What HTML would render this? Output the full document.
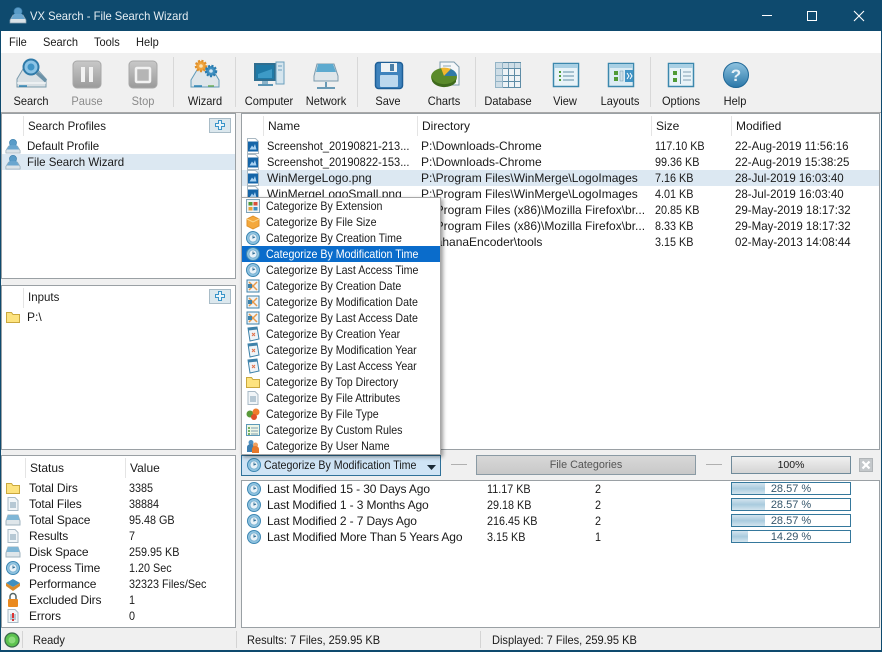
<!DOCTYPE html>
<html><head><meta charset="utf-8"><title>VX Search</title>
<style>
html,body{margin:0;padding:0;width:882px;height:652px;overflow:hidden;background:#f0f0f0}
body{position:relative;font:12px "Liberation Sans",sans-serif;color:#1a1a1a}
.a,.t,svg.i{position:absolute}
.t{white-space:nowrap;line-height:16px;height:16px}
.g{color:#8a8a8a}
.c{text-align:center}
.b{background:#fff;position:absolute;border:1px solid #9aa0a4;box-sizing:border-box}
.m{left:266px;transform:scaleX(.886);transform-origin:0 50%}
.n{transform:scaleX(.9);transform-origin:0 50%}
.d{transform:scaleX(.958);transform-origin:0 50%}
.s{transform:scaleX(.92);transform-origin:0 50%}
.c.s{transform-origin:50% 50%}
.l{transform:scaleX(.958);transform-origin:0 50%}
.k{letter-spacing:-.13px}
.p{position:absolute;left:731px;width:120px;height:13px;border:1px solid #35789c;box-sizing:border-box;background:#fff;text-align:center;line-height:12px;font-size:11px;color:#35566b}
.p i{position:absolute;left:0;top:0;bottom:0;background:linear-gradient(#d3e4ee,#a9cbde 50%,#d3e4ee)}
.p span{position:relative}
</style></head><body>
<svg width="0" height="0" style="position:absolute">
<defs>
<symbol id="clock" viewBox="0 0 16 16"><circle cx="8" cy="8" r="6.500" fill="#8fc3e0" stroke="#3d87b3"/><circle cx="8" cy="8" r="4" fill="#e8f2f8" stroke="#5f9fc6" stroke-width=".6"/><path d="M8 5.500V8l2-1" stroke="#2f6e96" fill="none" stroke-width="1"/></symbol>
<symbol id="png" viewBox="0 0 16 16"><path d="M2.500 .5h8l3 3v12h-11z" fill="#fff" stroke="#a9b8c2"/><rect x="3" y="3.500" width="10" height="10" fill="#1565a8"/><path d="M4.500 11.500l2.500-4 1.500 2 1.500-3.500 1.500 5.500z" fill="#a9d2f2"/></symbol>
<symbol id="folder" viewBox="0 0 16 16"><path d="M1.500 3.500h5l1.500 2h6.500v8h-13z" fill="#fde37f" stroke="#caa83e"/></symbol>
<symbol id="cal" viewBox="0 0 16 16"><rect x="2" y="2" width="12" height="12" fill="#eef4f8" stroke="#3e82aa"/><path d="M4 4l8 8M12 4l-8 8" stroke="#e89a4a" stroke-width="1.500"/><rect x="3" y="6" width="4" height="4" fill="#3e82aa"/></symbol>
<symbol id="year" viewBox="0 0 16 16"><path d="M3 2l9-1 2 12-9 2z" fill="#eef4f8" stroke="#3e82aa"/><path d="M3 2l9-1 .4 2.500-9 1z" fill="#3e82aa"/><path d="M7 7l3 3M10 7l-3 3" stroke="#e0704a"/></symbol>
<symbol id="doc" viewBox="0 0 16 16"><path d="M3 1.500h7l3 3v10H3z" fill="#f1f5f8" stroke="#a9bac6"/><path d="M5 7h6M5 9h6M5 11h6" stroke="#7b9bb0"/></symbol>
<symbol id="disk" viewBox="0 0 16 16"><path d="M3 3h10l2 6v4H1V9z" fill="#dfe6ea" stroke="#9fb3bf"/><path d="M3 3h10l1.500 5h-13z" fill="#7fb6d6"/></symbol>
<symbol id="prof" viewBox="0 0 18 18"><path d="M1 14l3-5h10l3 5v3H1z" fill="#dbe3e8" stroke="#8ea4b2" stroke-width=".7"/><circle cx="9" cy="5.500" r="4" fill="#5a9cc8" stroke="#3c7fac" stroke-width=".7"/><path d="M5 8h8l3 5H2z" fill="#6aa6cf"/></symbol>
</defs></svg>

<!-- title -->
<div class="a" style="left:0;top:0;width:882px;height:31px;background:#0e4a6e"></div>
<svg class="i" style="left:9px;top:6px" width="18" height="18"><use href="#prof"/></svg>
<div class="t" style="left:30px;top:8px;color:#e6eef3;transform:scaleX(.935);transform-origin:0 50%">VX Search - File Search Wizard</div>
<svg class="i" style="left:755px;top:8px" width="120" height="16"><path d="M7 7.500h10" stroke="#fff"/><rect x="52.500" y="3.500" width="9" height="9" fill="none" stroke="#fff"/><path d="M99 3l10 10M109 3l-10 10" stroke="#fff" stroke-width="1.100"/></svg>

<!-- frame -->
<div class="a" style="left:0;top:31px;width:1px;height:621px;background:#0e4a6e"></div>
<div class="a" style="right:0;top:31px;width:1px;height:621px;background:#0e4a6e"></div>
<div class="a" style="left:0;top:650px;width:882px;height:2px;background:#0e4a6e"></div>

<!-- menu -->
<div class="a" style="left:1px;top:31px;width:880px;height:22px;background:#fff"></div>
<div class="t s" style="left:9px;top:34px">File</div>
<div class="t s" style="left:43px;top:34px">Search</div>
<div class="t s" style="left:94px;top:34px">Tools</div>
<div class="t s" style="left:136px;top:34px">Help</div>

<!-- toolbar -->
<div class="a" style="left:1px;top:53px;width:880px;height:59px;background:#f0f0f0"></div>
<div class="a" style="left:1px;top:112px;width:880px;height:1px;background:#a8a8a8"></div>
<div class="a" style="left:173px;top:57px;width:1px;height:50px;background:#d8d8d8"></div>
<div class="a" style="left:235px;top:57px;width:1px;height:50px;background:#d8d8d8"></div>
<div class="a" style="left:357px;top:57px;width:1px;height:50px;background:#d8d8d8"></div>
<div class="a" style="left:475px;top:57px;width:1px;height:50px;background:#d8d8d8"></div>
<div class="a" style="left:650px;top:57px;width:1px;height:50px;background:#d8d8d8"></div>

<!-- toolbar icons -->
<svg class="i" style="left:0;top:56px" width="882" height="36">
<defs><linearGradient id="gr" x1="0" y1="0" x2="0" y2="1"><stop offset="0" stop-color="#c9c9c9"/><stop offset="1" stop-color="#9a9a9a"/></linearGradient>
<linearGradient id="bl" x1="0" y1="0" x2="0" y2="1"><stop offset="0" stop-color="#8fc3e0"/><stop offset="1" stop-color="#2a77a8"/></linearGradient></defs>
<!-- Search -->
<path d="M17 23l6-10h14l9 10v8H17z" fill="#d9e0e4" stroke="#7c9bad"/><path d="M17 27h29" stroke="#fff"/><path d="M19 30h8" stroke="#2f85b5" stroke-width="1.500"/>
<circle cx="31" cy="11" r="7.500" fill="#8cc4e6" stroke="#2f7aa8" stroke-width="2"/><circle cx="31" cy="11" r="3.500" fill="#3f94c6"/><path d="M37 17l9 8" stroke="#6b92a8" stroke-width="3.500"/>
<!-- Pause -->
<rect x="73" y="5" width="28" height="27" rx="4" fill="url(#gr)" stroke="#a8a8a8"/><rect x="81" y="11" width="4" height="15" fill="#f2f2f2"/><rect x="89" y="11" width="4" height="15" fill="#f2f2f2"/>
<!-- Stop -->
<rect x="129" y="5" width="28" height="27" rx="4" fill="url(#gr)" stroke="#a8a8a8"/><rect x="136" y="12" width="14" height="14" rx="1" fill="#b5b5b5" stroke="#f2f2f2" stroke-width="2.500"/>
<!-- Wizard -->
<path d="M191 24l6-10h16l6 10v7h-28z" fill="#dfe6ea" stroke="#5f9ab8"/><path d="M194 30h8" stroke="#2f85b5" stroke-width="1.500"/><path d="M208 30h6" stroke="#6fae5a" stroke-width="1.500"/>
<circle cx="201" cy="10" r="5" fill="#f0a33c" stroke="#e0902a" stroke-width="2.500" stroke-dasharray="2 1.400"/><circle cx="211" cy="15" r="5" fill="#3f8fc0" stroke="#2a7cb0" stroke-width="2.500" stroke-dasharray="2 1.400"/><circle cx="201" cy="10" r="1.800" fill="#fbe3b4"/><circle cx="211" cy="15" r="1.800" fill="#cfe6f3"/>
<!-- Computer -->
<rect x="255" y="8" width="20" height="16" fill="#1f79a6" stroke="#2f6e90" stroke-width="2"/><path d="M258 18l14-5v9h-14z" fill="#3d9ac6"/><rect x="262" y="25" width="6" height="3" fill="#8cb3c8"/><rect x="258" y="28" width="15" height="2" fill="#5a94b4"/>
<rect x="276" y="6" width="8" height="22" fill="#d5e5ee" stroke="#6ba0bd"/><path d="M278 10h4M278 14h4" stroke="#6ba0bd"/>
<!-- Network -->
<path d="M314 20l3-12h17l4 12v5h-24z" fill="#dfe6ea" stroke="#7c9bad"/><path d="M316 16l2-8h15l3 8z" fill="#5daacf"/><path d="M326 26v5M317 32h18" stroke="#6a9ab5" stroke-width="2"/>
<!-- Save -->
<rect x="375.500" y="6.500" width="27" height="26" rx="3" fill="#3f83bd" stroke="#1f5f97" stroke-width="1.500"/><rect x="381" y="7" width="16" height="9" fill="#eef2f5"/><rect x="390" y="8" width="4" height="7" fill="#4b7fa8"/><rect x="380" y="19" width="18" height="12" rx="1" fill="#bcd8ee"/>
<!-- Charts -->
<path d="M440 6h14l5 5v18h-19z" fill="#f4f7f9" stroke="#7c9bad"/><path d="M443 10h8M443 13h8" stroke="#8aa4b4"/>
<ellipse cx="444" cy="21" rx="13" ry="9" fill="#5a8a2a"/><path d="M444 20l-3-8a13 9 0 0 1 10 1z" fill="#f1b72f"/><path d="M444 20l7-7a13 9 0 0 1 6 7z" fill="#2f7aa8"/><path d="M432 22a13 9 0 0 0 24 1l0 3a13 9 0 0 1-24-1z" fill="#3f6a1c"/>
<!-- Database -->
<rect x="495.500" y="6.500" width="25" height="25" fill="#eef3f6" stroke="#5e8ca6"/><path d="M495 12.500h26M495 19.500h26M495 25.500h26M502.500 6v26M508.500 6v26M514.500 6v26" stroke="#5e8ca6" fill="none"/><rect x="495" y="6" width="8" height="26" fill="#b9cfdc" opacity=".6"/><rect x="503" y="7" width="18" height="5" fill="#b9cfdc" opacity=".6"/>
<!-- View -->
<rect x="553.500" y="7.500" width="25" height="23" fill="#e8f3f8" stroke="#3c88ad" stroke-width="1.500"/><rect x="554" y="8" width="24" height="4" fill="#a9d0e4"/><path d="M559 16h2M559 20h2M559 24h2" stroke="#4f9a36" stroke-width="2"/><path d="M563 16h11M563 20h11M563 24h11" stroke="#5f8ca5"/>
<!-- Layouts -->
<rect x="608.500" y="7.500" width="25" height="23" fill="#dcecf4" stroke="#3c88ad" stroke-width="1.500"/><rect x="609" y="8" width="24" height="4" fill="#a9d0e4"/><rect x="625" y="14" width="8" height="12" fill="#3f94c6"/><rect x="614" y="15" width="4" height="4" fill="#4f9a36"/><rect x="614" y="21" width="4" height="4" fill="#4f9a36"/><rect x="620" y="15" width="3" height="10" fill="#cfe0e8" stroke="#6d98ae" stroke-width=".5"/><path d="M627 17l2 3-2 3M630 17l2 3-2 3" stroke="#fff" fill="none"/>
<!-- Options -->
<rect x="668.500" y="7.500" width="25" height="23" fill="#e8f3f8" stroke="#3c88ad" stroke-width="1.500"/><rect x="669" y="8" width="24" height="4" fill="#a9d0e4"/><rect x="673" y="15" width="4" height="4" fill="#4f9a36"/><rect x="673" y="22" width="4" height="4" fill="#4f9a36"/><path d="M680.500 13v15" stroke="#6d98ae"/><path d="M683 16h8M683 20h8M683 24h8" stroke="#7f9fb2"/>
<!-- Help -->
<circle cx="736" cy="19" r="12.500" fill="url(#bl)" stroke="#1f6796"/>
<text x="736" y="25" font-family="Liberation Sans" font-weight="bold" font-size="17" fill="#e6f1f7" text-anchor="middle">?</text>
</svg>

<!-- toolbar labels -->
<div class="t c g s" style="left:66px;top:93px;width:42px">Pause</div>
<div class="t c s" style="left:1px;top:93px;width:60px">Search</div>
<div class="t c g s" style="left:122px;top:93px;width:42px">Stop</div>
<div class="t c s" style="left:175px;top:93px;width:60px">Wizard</div>
<div class="t c s" style="left:239px;top:93px;width:60px">Computer</div>
<div class="t c s" style="left:296px;top:93px;width:60px">Network</div>
<div class="t c s" style="left:358px;top:93px;width:60px">Save</div>
<div class="t c s" style="left:414px;top:93px;width:60px">Charts</div>
<div class="t c s" style="left:478px;top:93px;width:60px">Database</div>
<div class="t c s" style="left:535px;top:93px;width:60px">View</div>
<div class="t c s" style="left:590px;top:93px;width:60px">Layouts</div>
<div class="t c s" style="left:651px;top:93px;width:60px">Options</div>
<div class="t c s" style="left:705px;top:93px;width:60px">Help</div>

<!-- Search profiles panel -->
<div class="b" style="left:1px;top:113px;width:235px;height:166px"></div>
<div class="a" style="left:23px;top:116px;width:1px;height:20px;background:#e4e4e4"></div>
<div class="t l" style="left:28px;top:118px">Search Profiles</div>
<div class="a" style="left:209px;top:118px;width:22px;height:15px;background:#dce8ee;border:1px solid #a9bcc7;box-sizing:border-box"></div>
<svg class="i" style="left:214px;top:119px" width="12" height="12"><path d="M4.500 1.500h3v3h3v3h-3v3h-3v-3h-3v-3h3z" fill="#eaf5fb" stroke="#3a94c8"/></svg>
<div class="a" style="left:2px;top:154px;width:233px;height:16px;background:#dce8f2"></div>
<svg class="i" style="left:5px;top:138px" width="16" height="16"><use href="#prof"/></svg>
<svg class="i" style="left:5px;top:154px" width="16" height="16"><use href="#prof"/></svg>
<div class="t l" style="left:27px;top:138px">Default Profile</div>
<div class="t l" style="left:27px;top:154px">File Search Wizard</div>

<!-- Inputs -->
<div class="b" style="left:1px;top:285px;width:235px;height:165px"></div>
<div class="a" style="left:23px;top:288px;width:1px;height:20px;background:#e4e4e4"></div>
<div class="t l" style="left:28px;top:289px">Inputs</div>
<div class="a" style="left:209px;top:289px;width:22px;height:15px;background:#dce8ee;border:1px solid #a9bcc7;box-sizing:border-box"></div>
<svg class="i" style="left:214px;top:290px" width="12" height="12"><path d="M4.500 1.500h3v3h3v3h-3v3h-3v-3h-3v-3h3z" fill="#eaf5fb" stroke="#3a94c8"/></svg>
<svg class="i" style="left:5px;top:309px" width="16" height="16"><use href="#folder"/></svg>
<div class="t" style="left:27px;top:309px">P:\</div>

<!-- Status panel -->
<div class="b" style="left:1px;top:455px;width:235px;height:173px"></div>
<div class="a" style="left:25px;top:458px;width:1px;height:20px;background:#e4e4e4"></div>
<div class="a" style="left:125px;top:458px;width:1px;height:20px;background:#e4e4e4"></div>
<div class="t" style="left:30px;top:460px">Status</div>
<div class="t" style="left:130px;top:460px">Value</div>
<svg class="i" style="left:5px;top:480px" width="16" height="16"><use href="#folder"/></svg>
<svg class="i" style="left:5px;top:496px" width="16" height="16"><use href="#doc"/></svg>
<svg class="i" style="left:5px;top:512px" width="16" height="16"><use href="#disk"/></svg>
<svg class="i" style="left:5px;top:528px" width="16" height="16"><use href="#doc"/></svg>
<svg class="i" style="left:5px;top:544px" width="16" height="16"><use href="#disk"/></svg>
<svg class="i" style="left:5px;top:560px" width="16" height="16"><use href="#clock"/></svg>
<svg class="i" style="left:5px;top:576px" width="16" height="16"><path d="M1 7l7-4 7 4-7 4z" fill="#3f8fc0"/><path d="M1 7v3l7 5 7-5V7l-7 4z" fill="#d98a2c"/></svg>
<svg class="i" style="left:5px;top:592px" width="16" height="16"><rect x="3" y="7" width="10" height="8" rx="1" fill="#ea8a20"/><path d="M5 7V4.500a3 3 0 0 1 6 0V7" fill="none" stroke="#566" stroke-width="1.500"/></svg>
<svg class="i" style="left:5px;top:608px" width="16" height="16"><use href="#doc"/><rect x="7" y="5" width="2" height="5" fill="#d33"/><rect x="7" y="11" width="2" height="2" fill="#d33"/></svg>
<div class="t k" style="left:29px;top:480px">Total Dirs</div><div class="t n" style="left:129px;top:480px">3385</div>
<div class="t k" style="left:29px;top:496px">Total Files</div><div class="t n" style="left:129px;top:496px">38884</div>
<div class="t k" style="left:29px;top:512px">Total Space</div><div class="t n" style="left:129px;top:512px">95.48 GB</div>
<div class="t k" style="left:29px;top:528px">Results</div><div class="t n" style="left:129px;top:528px">7</div>
<div class="t k" style="left:29px;top:544px">Disk Space</div><div class="t n" style="left:129px;top:544px">259.95 KB</div>
<div class="t k" style="left:29px;top:560px">Process Time</div><div class="t n" style="left:129px;top:560px">1.20 Sec</div>
<div class="t k" style="left:29px;top:576px">Performance</div><div class="t n" style="left:129px;top:576px">32323 Files/Sec</div>
<div class="t k" style="left:29px;top:592px">Excluded Dirs</div><div class="t n" style="left:129px;top:592px">1</div>
<div class="t k" style="left:29px;top:608px">Errors</div><div class="t n" style="left:129px;top:608px">0</div>

<!-- File list -->
<div class="b" style="left:241px;top:113px;width:639px;height:337px"></div>
<div class="a" style="left:263px;top:116px;width:1px;height:20px;background:#e4e4e4"></div>
<div class="a" style="left:417px;top:116px;width:1px;height:20px;background:#e4e4e4"></div>
<div class="a" style="left:651px;top:116px;width:1px;height:20px;background:#e4e4e4"></div>
<div class="a" style="left:731px;top:116px;width:1px;height:20px;background:#e4e4e4"></div>
<div class="t" style="left:268px;top:118px">Name</div>
<div class="t" style="left:422px;top:118px">Directory</div>
<div class="t" style="left:656px;top:118px">Size</div>
<div class="t" style="left:736px;top:118px">Modified</div>
<div class="a" style="left:242px;top:170px;width:637px;height:16px;background:#dce8f2"></div>
<svg class="i" style="left:245px;top:138px" width="16" height="16"><use href="#png"/></svg>
<svg class="i" style="left:245px;top:154px" width="16" height="16"><use href="#png"/></svg>
<svg class="i" style="left:245px;top:170px" width="16" height="16"><use href="#png"/></svg>
<svg class="i" style="left:245px;top:186px" width="16" height="16"><use href="#png"/></svg>
<div class="t s" style="left:267px;top:138px">Screenshot_20190821-213...</div><div class="t" style="left:421px;top:138px">P:\Downloads-Chrome</div><div class="t n" style="left:655px;top:138px">117.10 KB</div><div class="t d" style="left:735px;top:138px">22-Aug-2019 11:56:16</div>
<div class="t s" style="left:267px;top:154px">Screenshot_20190822-153...</div><div class="t" style="left:421px;top:154px">P:\Downloads-Chrome</div><div class="t n" style="left:655px;top:154px">99.36 KB</div><div class="t d" style="left:735px;top:154px">22-Aug-2019 15:38:25</div>
<div class="t" style="left:267px;top:170px">WinMergeLogo.png</div><div class="t" style="left:421px;top:170px">P:\Program Files\WinMerge\LogoImages</div><div class="t n" style="left:655px;top:170px">7.16 KB</div><div class="t d" style="left:735px;top:170px">28-Jul-2019 16:03:40</div>
<div class="t" style="left:267px;top:186px">WinMergeLogoSmall.png</div><div class="t" style="left:421px;top:186px">P:\Program Files\WinMerge\LogoImages</div><div class="t n" style="left:655px;top:186px">4.01 KB</div><div class="t d" style="left:735px;top:186px">28-Jul-2019 16:03:40</div>
<div class="t" style="left:421px;top:202px">P:\Program Files (x86)\Mozilla Firefox\br...</div><div class="t n" style="left:655px;top:202px">20.85 KB</div><div class="t d" style="left:735px;top:202px">29-May-2019 18:17:32</div>
<div class="t" style="left:421px;top:218px">P:\Program Files (x86)\Mozilla Firefox\br...</div><div class="t n" style="left:655px;top:218px">8.33 KB</div><div class="t d" style="left:735px;top:218px">29-May-2019 18:17:32</div>
<div class="t" style="left:421px;top:234px">P:\ahanaEncoder\tools</div><div class="t n" style="left:655px;top:234px">3.15 KB</div><div class="t d" style="left:735px;top:234px">02-May-2013 14:08:44</div>

<!-- Bottom toolbar -->
<div class="a" style="left:241px;top:455px;width:200px;height:21px;box-sizing:border-box;border:1px solid #2f7199;background:#cfe4f5"></div>
<svg class="i" style="left:246px;top:457px" width="16" height="16"><use href="#clock"/></svg>
<div class="t" style="left:264px;top:457px;transform:scaleX(.886);transform-origin:0 50%">Categorize By Modification Time</div>
<svg class="i" style="left:427px;top:465px" width="10" height="6"><path d="M0 0h9L4.500 5z" fill="#1a2a36"/></svg>
<div class="a" style="left:451px;top:464px;width:16px;height:1px;background:#b0b0b0"></div>
<div class="a" style="left:476px;top:455px;width:220px;height:20px;box-sizing:border-box;border:1px solid #8a9aa4;background:linear-gradient(#d8d8d8,#c8c8c8);text-align:center;line-height:18px;color:#555;font-size:10.8px">File Categories</div>
<div class="a" style="left:706px;top:464px;width:16px;height:1px;background:#b0b0b0"></div>
<div class="a" style="left:731px;top:456px;width:120px;height:18px;box-sizing:border-box;border:1px solid #6f8a9a;background:linear-gradient(#f0f0f0,#d4d4d4);text-align:center;line-height:16px;font-size:10.5px">100%</div>
<div class="a" style="left:859px;top:458px;width:14px;height:14px;background:#c4c8cb;border:1px solid #b0b4b7;box-sizing:border-box"></div>
<svg class="i" style="left:859px;top:458px" width="14" height="14"><path d="M3.500 3.500l7 7M10.500 3.500l-7 7" stroke="#fff" stroke-width="2.200"/></svg>

<!-- Category list -->
<div class="b" style="left:241px;top:480px;width:639px;height:148px"></div>
<svg class="i" style="left:246px;top:481px" width="16" height="16"><use href="#clock"/></svg>
<svg class="i" style="left:246px;top:497px" width="16" height="16"><use href="#clock"/></svg>
<svg class="i" style="left:246px;top:513px" width="16" height="16"><use href="#clock"/></svg>
<svg class="i" style="left:246px;top:529px" width="16" height="16"><use href="#clock"/></svg>
<div class="t k" style="left:267px;top:481px">Last Modified 15 - 30 Days Ago</div><div class="t n" style="left:487px;top:481px">11.17 KB</div><div class="t n" style="left:595px;top:481px">2</div>
<div class="t k" style="left:267px;top:497px">Last Modified 1 - 3 Months Ago</div><div class="t n" style="left:487px;top:497px">29.18 KB</div><div class="t n" style="left:595px;top:497px">2</div>
<div class="t k" style="left:267px;top:513px">Last Modified 2 - 7 Days Ago</div><div class="t n" style="left:487px;top:513px">216.45 KB</div><div class="t n" style="left:595px;top:513px">2</div>
<div class="t k" style="left:267px;top:529px">Last Modified More Than 5 Years Ago</div><div class="t n" style="left:487px;top:529px">3.15 KB</div><div class="t n" style="left:595px;top:529px">1</div>
<div class="p" style="top:482px"><i style="width:33px"></i><span>28.57 %</span></div>
<div class="p" style="top:498px"><i style="width:33px"></i><span>28.57 %</span></div>
<div class="p" style="top:514px"><i style="width:33px"></i><span>28.57 %</span></div>
<div class="p" style="top:530px"><i style="width:16px"></i><span>14.29 %</span></div>

<!-- Status bar -->
<div class="a" style="left:1px;top:628px;width:880px;height:22px;background:#f0f0f0"></div>
<div class="a" style="left:22px;top:631px;width:1px;height:17px;background:#d4d4d4"></div>
<div class="a" style="left:236px;top:631px;width:1px;height:17px;background:#d4d4d4"></div>
<div class="a" style="left:480px;top:631px;width:1px;height:17px;background:#d4d4d4"></div>
<svg class="i" style="left:4px;top:632px" width="16" height="16"><circle cx="8" cy="8" r="7" fill="#5cc24f" stroke="#3a6a4a" stroke-width="1.300"/><circle cx="8" cy="8" r="3.500" fill="#8bdc7c"/></svg>
<div class="t s" style="left:33px;top:632px">Ready</div>
<div class="t s" style="left:247px;top:632px">Results: 7 Files, 259.95 KB</div>
<div class="t s" style="left:492px;top:632px">Displayed: 7 Files, 259.95 KB</div>

<!-- Popup menu -->
<div class="a" style="left:241px;top:197px;width:200px;height:258px;background:#fff;border:1px solid #a8a8a8;box-sizing:border-box;box-shadow:2px 2px 4px rgba(0,0,0,.4)"></div>
<div class="a" style="left:242px;top:246px;width:198px;height:16px;background:#0a6ccb"></div>
<svg class="i" style="left:245px;top:198px" width="16" height="16"><rect x="1.500" y="1.500" width="13" height="13" fill="#eef3f6" stroke="#7fa3b8"/><rect x="3.500" y="4" width="4" height="3.500" fill="#4f9a36"/><rect x="8.500" y="4" width="4" height="3.500" fill="#d8503a"/><rect x="3.500" y="9" width="4" height="3.500" fill="#e8a23a"/><rect x="8.500" y="9" width="4" height="3.500" fill="#3f8fc0"/></svg>
<svg class="i" style="left:245px;top:214px" width="16" height="16"><path d="M2 5l6-3 6 3v7l-6 3-6-3z" fill="#f4a83c" stroke="#e0922a"/><path d="M2 5l6 3 6-3" fill="none" stroke="#fbd78c"/></svg>
<svg class="i" style="left:245px;top:230px" width="16" height="16"><use href="#clock"/></svg>
<svg class="i" style="left:245px;top:246px" width="16" height="16"><use href="#clock"/></svg>
<svg class="i" style="left:245px;top:262px" width="16" height="16"><use href="#clock"/></svg>
<svg class="i" style="left:245px;top:278px" width="16" height="16"><use href="#cal"/></svg>
<svg class="i" style="left:245px;top:294px" width="16" height="16"><use href="#cal"/></svg>
<svg class="i" style="left:245px;top:310px" width="16" height="16"><use href="#cal"/></svg>
<svg class="i" style="left:245px;top:326px" width="16" height="16"><use href="#year"/></svg>
<svg class="i" style="left:245px;top:342px" width="16" height="16"><use href="#year"/></svg>
<svg class="i" style="left:245px;top:358px" width="16" height="16"><use href="#year"/></svg>
<svg class="i" style="left:245px;top:374px" width="16" height="16"><use href="#folder"/></svg>
<svg class="i" style="left:245px;top:390px" width="16" height="16"><use href="#doc"/></svg>
<svg class="i" style="left:245px;top:406px" width="16" height="16"><circle cx="5" cy="8" r="3.500" fill="#5a9a3a"/><circle cx="11" cy="6" r="3.500" fill="#ef7b2c"/><circle cx="9" cy="11" r="3" fill="#e0502a"/></svg>
<svg class="i" style="left:245px;top:422px" width="16" height="16"><rect x="1.500" y="2.500" width="13" height="11" fill="#eef6e6" stroke="#5e9ab8"/><path d="M3 6h2M3 9h2M3 12h2" stroke="#4f9a36" stroke-width="1.500"/><path d="M6 6h7M6 9h7M6 12h7" stroke="#7f9fb2"/></svg>
<svg class="i" style="left:245px;top:438px" width="16" height="16"><circle cx="6" cy="4.500" r="2.500" fill="#4f8fc0"/><path d="M2 14V9a4 3 0 0 1 8 0v5z" fill="#3f7fb0"/><circle cx="10.500" cy="7" r="2.500" fill="#f0a060"/><path d="M7 15v-4a3.500 3 0 0 1 7 0v4z" fill="#e8782a"/></svg>
<div class="t m" style="top:198px">Categorize By Extension</div>
<div class="t m" style="top:214px">Categorize By File Size</div>
<div class="t m" style="top:230px">Categorize By Creation Time</div>
<div class="t m" style="top:246px;color:#fff">Categorize By Modification Time</div>
<div class="t m" style="top:262px">Categorize By Last Access Time</div>
<div class="t m" style="top:278px">Categorize By Creation Date</div>
<div class="t m" style="top:294px">Categorize By Modification Date</div>
<div class="t m" style="top:310px">Categorize By Last Access Date</div>
<div class="t m" style="top:326px">Categorize By Creation Year</div>
<div class="t m" style="top:342px">Categorize By Modification Year</div>
<div class="t m" style="top:358px">Categorize By Last Access Year</div>
<div class="t m" style="top:374px">Categorize By Top Directory</div>
<div class="t m" style="top:390px">Categorize By File Attributes</div>
<div class="t m" style="top:406px">Categorize By File Type</div>
<div class="t m" style="top:422px">Categorize By Custom Rules</div>
<div class="t m" style="top:438px">Categorize By User Name</div>
</body></html>
